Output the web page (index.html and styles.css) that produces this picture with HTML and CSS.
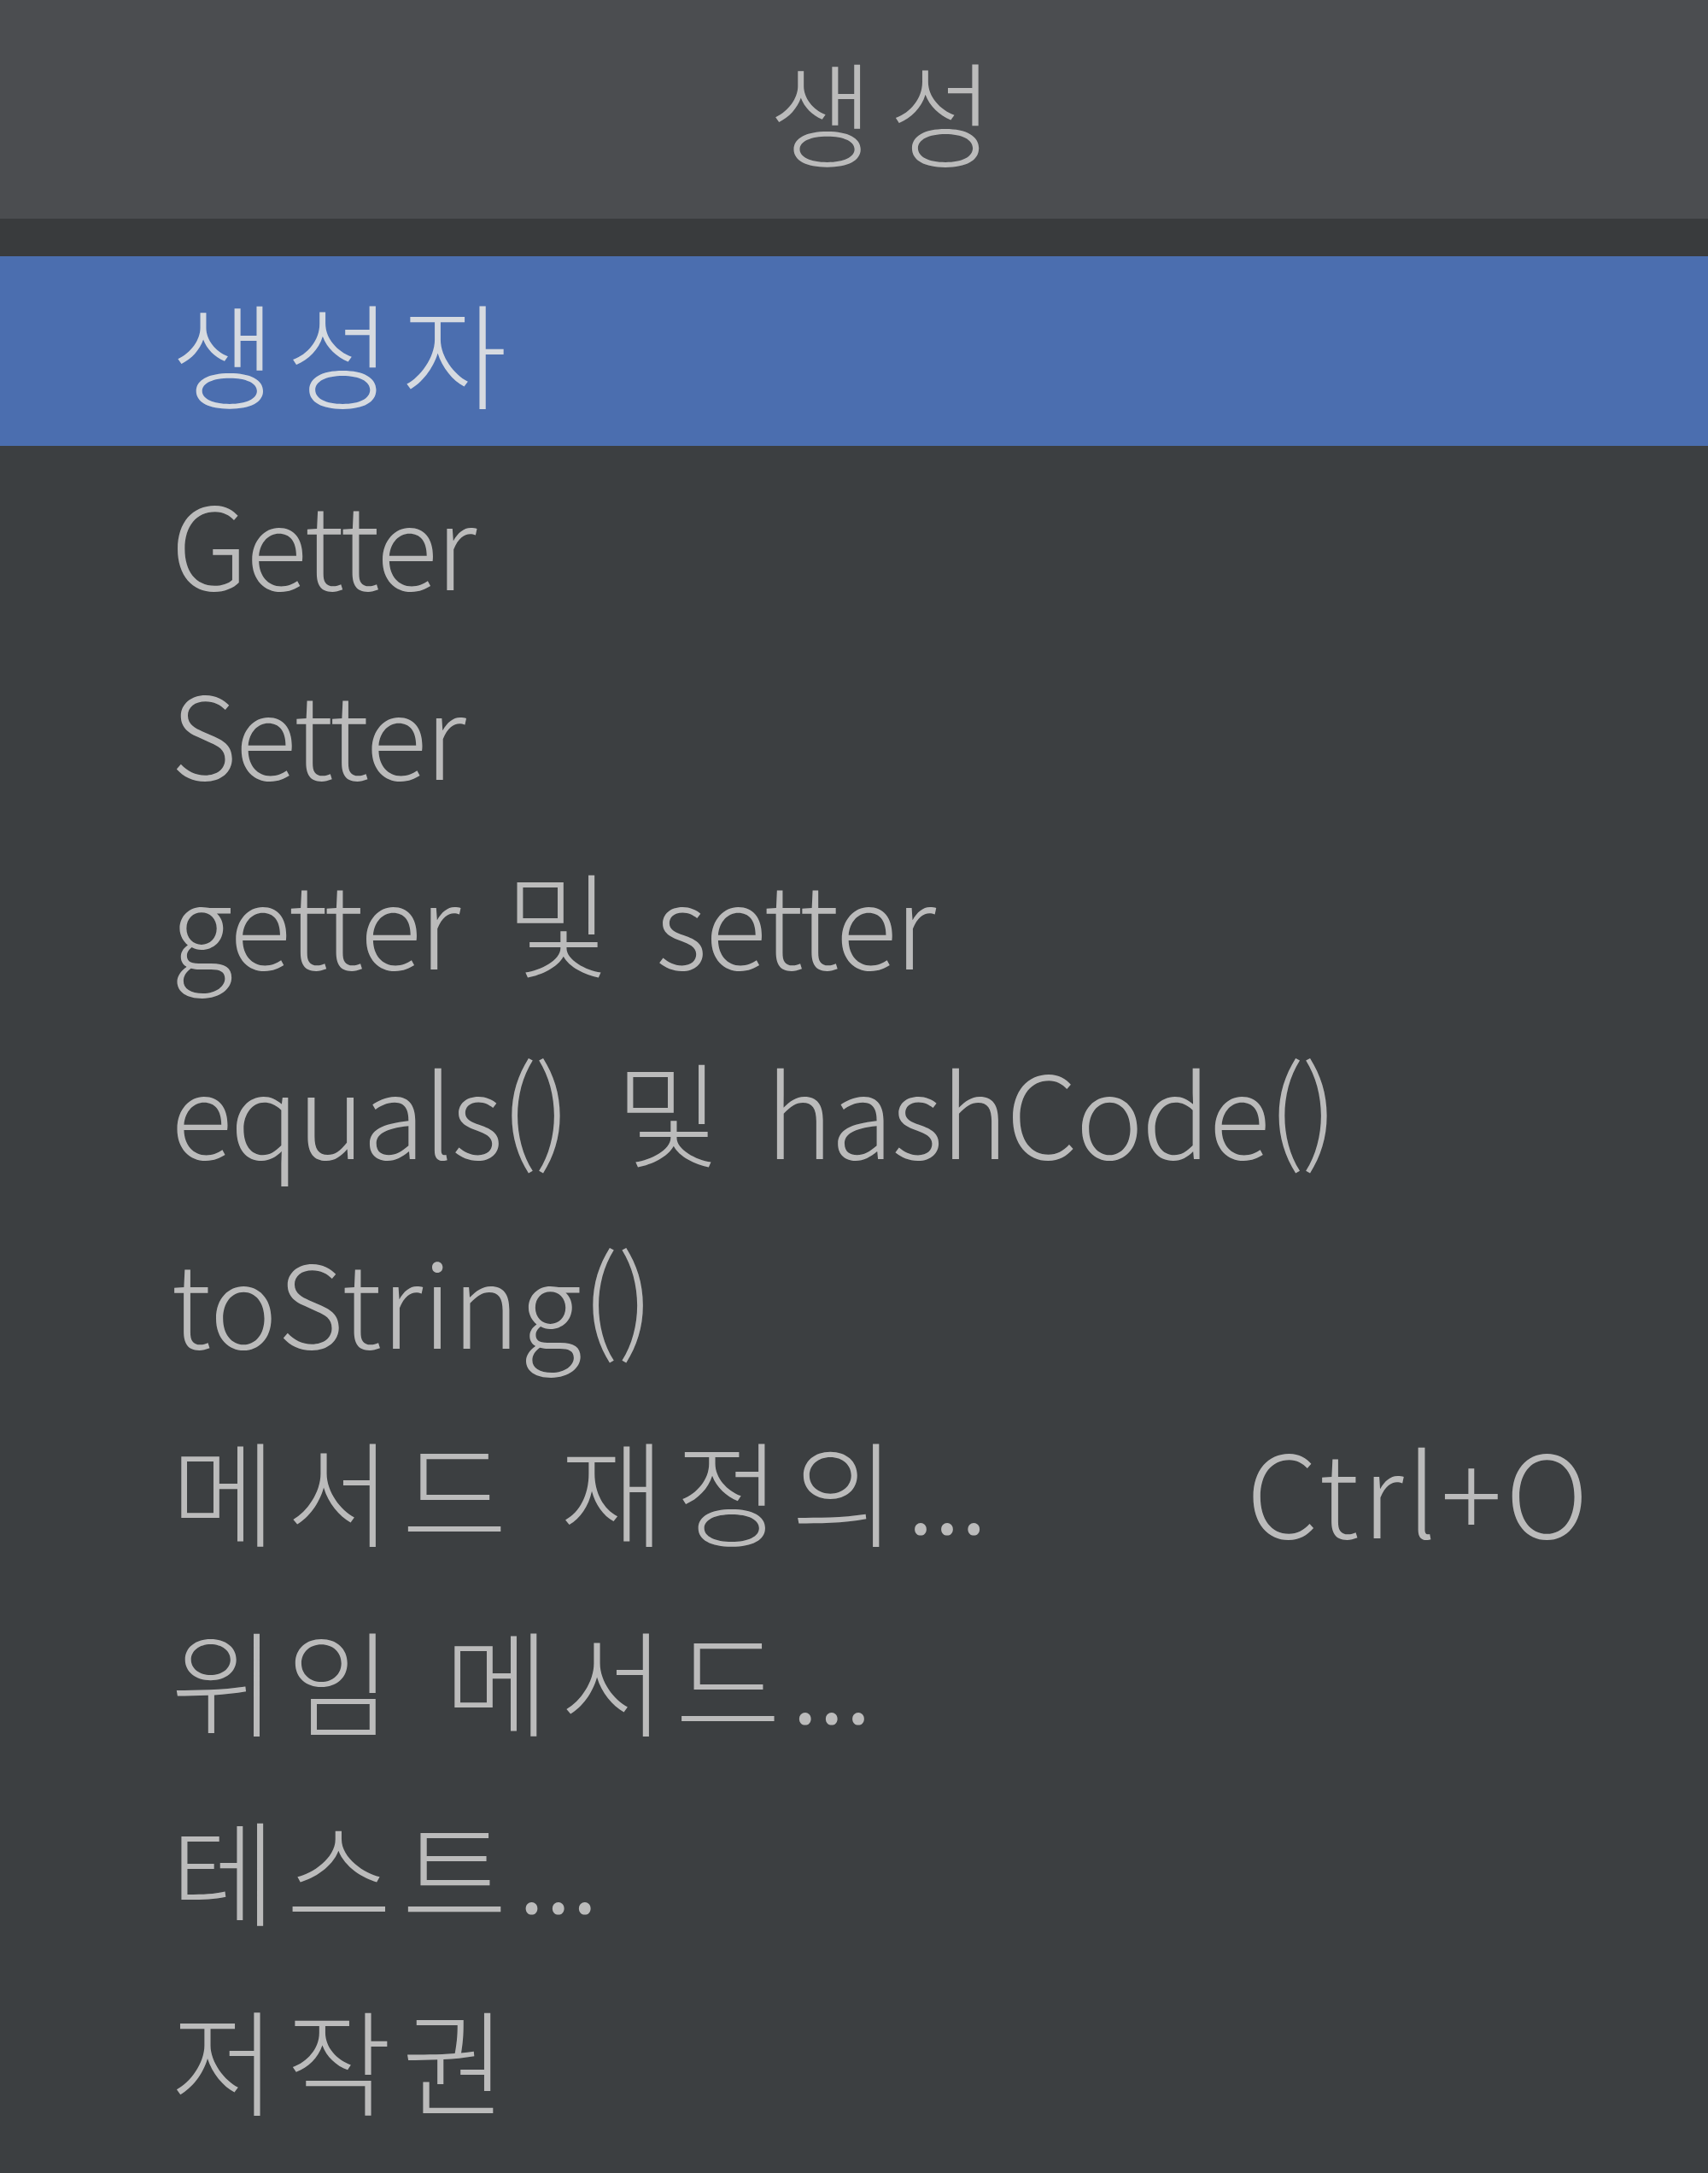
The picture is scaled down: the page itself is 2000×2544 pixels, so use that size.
FILE: index.html
```html
<!DOCTYPE html>
<html lang="ko">
<head>
<meta charset="utf-8">
<title>생성</title>
<link rel="stylesheet" href="styles.css">
</head>
<body>
<div class="popup">
  <div class="header"><span class="title">생성</span></div>
  <div class="strip"></div>
  <ul class="menu">
    <li class="item selected"><span class="label"><span class="ko">생성자</span></span></li>
    <li class="item"><span class="label">Getter</span></li>
    <li class="item"><span class="label">Setter</span></li>
    <li class="item"><span class="label">getter 및 setter</span></li>
    <li class="item"><span class="label">equals() 및 hashCode()</span></li>
    <li class="item"><span class="label wide">toString()</span></li>
    <li class="item"><span class="label"><span class="ko">메서드 재정의</span>...</span><span class="shortcut">Ctrl+O</span></li>
    <li class="item"><span class="label"><span class="ko">위임 메서드</span>...</span></li>
    <li class="item"><span class="label"><span class="ko">테스트</span>...</span></li>
    <li class="item"><span class="label"><span class="ko">저작권</span></span></li>
  </ul>
</div>
</body>
</html>
```
FILE: styles.css
```css
html, body {
  margin: 0;
  padding: 0;
}
body {
  width: 2000px;
  height: 2544px;
  background: #3c3f41;
  font-family: "Noto Sans CJK KR", "Noto Sans", sans-serif;
  font-weight: 300;
  color: #bbbbbb;
  overflow: hidden;
}
.popup {
  display: flex;
  flex-direction: column;
  width: 2000px;
  height: 2544px;
}
.header {
  height: 256px;
  background: #4b4d50;
  display: flex;
  align-items: center;
  justify-content: center;
  padding-left: 82px;
  box-sizing: border-box;
}
.title {
  font-size: 134px;
  line-height: 1;
  letter-spacing: 18px;
  color: #bbbbbb;
}
.strip {
  height: 44px;
  background: #393b3d;
}
.menu {
  list-style: none;
  margin: 0;
  padding: 0;
}
.item {
  height: 222px;
  display: flex;
  align-items: center;
  justify-content: space-between;
  padding: 0 136px 0 200px;
  font-size: 134px;
  line-height: 1;
  letter-spacing: -2.5px;
  word-spacing: 20px;
}
.ko {
  letter-spacing: 12px;
  word-spacing: 0;
}
.wide {
  letter-spacing: 0;
}
.item.selected {
  background: #4b6eaf;
  color: #d6dae0;
}
.shortcut {
  color: #bbbbbb;
  letter-spacing: 4px;
}
```
